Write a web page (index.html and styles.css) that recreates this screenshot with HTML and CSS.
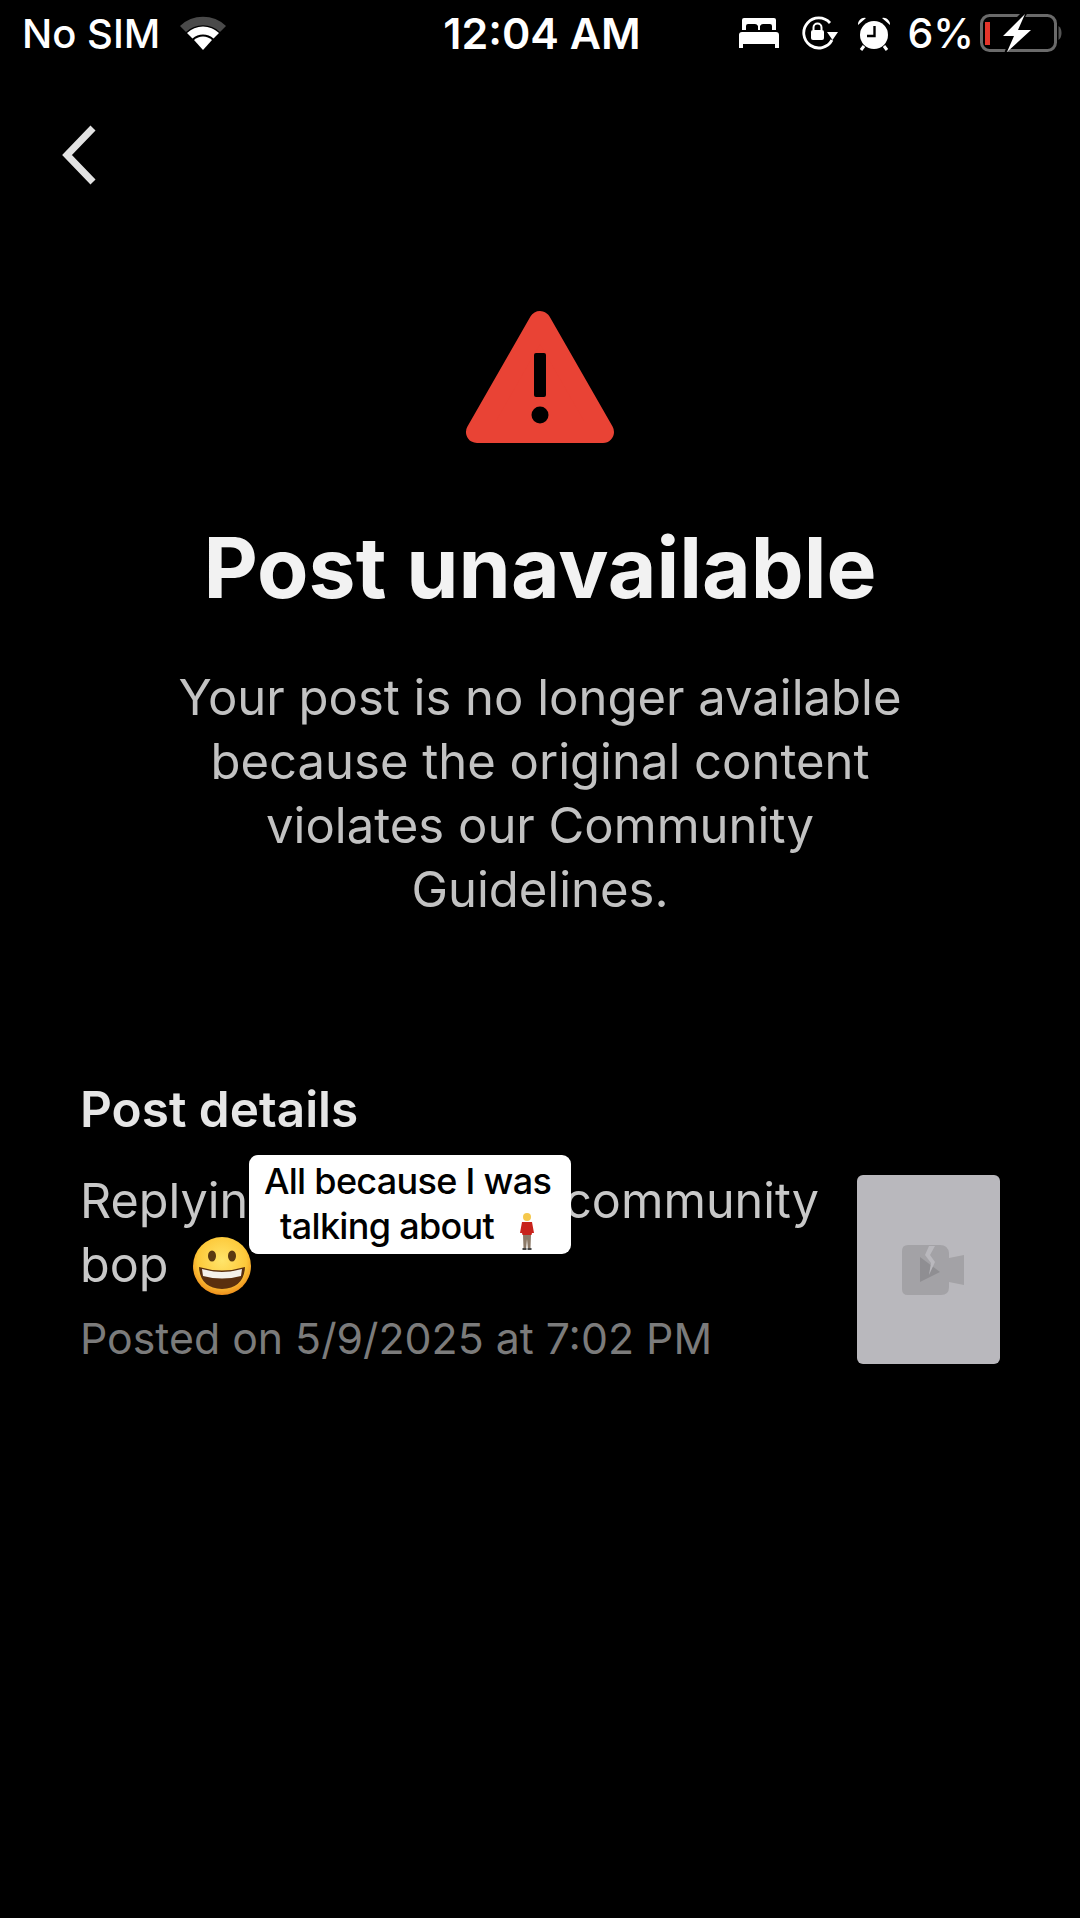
FILE: index.html
```html
<!DOCTYPE html>
<html lang="en">
<head>
  <meta charset="UTF-8">
  <meta name="viewport" content="width=device-width, initial-scale=1.0">
  <title>Post unavailable</title>
  <link rel="stylesheet" href="styles.css">
</head>
<body>
  <!-- Status bar -->
  <div class="status-bar">
    <div class="status-left">
      <span>No SIM</span>
      <svg class="wifi" width="50" height="36" viewBox="0 0 50 36">
        <path d="M2 11 A33 33 0 0 1 48 11 L42 17 A25 25 0 0 0 8 17 Z" fill="#4a4a4a"/>
        <path d="M9 18 A23 23 0 0 1 41 18 L35.500 23.500 A15.500 15.500 0 0 0 14.500 23.500 Z" fill="#fff"/>
        <path d="M16 25 A13 13 0 0 1 34 25 L25 35 Z" fill="#fff"/>
      </svg>
    </div>
    <div class="status-time">12:04 AM</div>
    <div class="status-right">
      <svg class="bed" width="42" height="32" viewBox="0 0 42 32">
        <path d="M4 3 Q4 1 6 1 H36 Q38 1 38 3 V13 H34 V9 Q34 7 32 7 H25 Q23 7 22 9 V13 H20 V9 Q19 7 17 7 H10 Q8 7 8 9 V13 H4 Z" fill="#fff"/>
        <path d="M1 18 Q1 15 4 15 H38 Q41 15 41 18 V31 H37 V27 H5 V31 H1 Z" fill="#fff"/>
      </svg>
      <svg class="lock" width="38" height="34" viewBox="0 0 38 34">
        <path d="M31 24 A15 15 0 1 1 29 7" fill="none" stroke="#fff" stroke-width="2.800"/>
        <path d="M26 16 L37 16 L31.500 24 Z" fill="#fff"/>
        <rect x="10" y="14" width="13" height="10" rx="2" fill="#fff"/>
        <path d="M12.500 14 V11.500 A4 4 0 0 1 20.500 11.500 V14" fill="none" stroke="#fff" stroke-width="2"/>
      </svg>
      <svg class="alarm" width="34" height="35" viewBox="0 0 34 35">
        <circle cx="17" cy="19" r="14" fill="#fff"/>
        <path d="M1 9 A6.500 6.500 0 0 1 9 2 Z M33 9 A6.500 6.500 0 0 0 25 2 Z" fill="#fff"/>
        <path d="M7 30 L4 34 M27 30 L30 34" stroke="#fff" stroke-width="3"/>
        <path d="M17.500 10 V20 H10" fill="none" stroke="#000" stroke-width="2.400"/>
      </svg>
      <span class="battery-pct">6%</span>
      <svg class="battery" width="82" height="40" viewBox="0 0 82 40">
        <rect x="1.500" y="2.500" width="74" height="35" rx="8" fill="none" stroke="#6a6a6a" stroke-width="3"/>
        <rect x="5" y="9" width="5" height="23" fill="#e5352b"/>
        <path d="M78.500 13 Q81.500 15 81.500 20 Q81.500 25 78.500 27 Z" fill="#555"/>
        <path d="M42 -1 L18 23 H30 L24 41 L55 15 H39 L48 -1 Z" fill="#000"/>
        <path d="M45 1 L23 23 H34 L27 39 L51 17 H38 L45 1 Z" fill="#fff"/>
      </svg>
    </div>
  </div>

  <!-- Nav -->
  <div class="nav">
    <svg width="36" height="62" viewBox="0 0 36 62">
      <path d="M32 4 L6 31 L32 58" fill="none" stroke="#e2e2e2" stroke-width="7"/>
    </svg>
  </div>

  <!-- Notice -->
  <div class="notice">
    <svg class="warn-icon" width="150" height="135" viewBox="0 0 150 135">
      <path d="M75 12 L12 122 H138 Z" fill="#e94335" stroke="#e94335" stroke-width="22" stroke-linejoin="round"/>
      <rect x="69" y="43" width="12" height="44" rx="2" fill="#000"/>
      <circle cx="75" cy="105" r="8.500" fill="#000"/>
    </svg>
    <h1>Post unavailable</h1>
    <p>Your post is no longer available<br>because the original content<br>violates our Community<br>Guidelines.</p>
  </div>

  <!-- Post details -->
  <div class="details">
    <h2>Post details</h2>
    <div class="details-row">
      <div class="details-text">
        <div class="caption">Replyin<span class="caption-gap"></span>community<br>bop
          <svg class="grin" width="60" height="60" viewBox="0 0 60 60">
            <defs>
              <radialGradient id="face" cx="50%" cy="40%" r="60%">
                <stop offset="0" stop-color="#ffe56b"/>
                <stop offset="0.7" stop-color="#fdc93a"/>
                <stop offset="1" stop-color="#ee8f1c"/>
              </radialGradient>
            </defs>
            <circle cx="30" cy="30" r="29" fill="url(#face)"/>
            <ellipse cx="20" cy="20" rx="4" ry="5.500" fill="#5a3a12"/>
            <ellipse cx="40" cy="20" rx="4" ry="5.500" fill="#5a3a12"/>
            <path d="M7 31 Q30 38 53 31 Q52 52 30 53 Q8 52 7 31 Z" fill="#5a2f0e"/>
            <path d="M10 33 Q30 39 50 33 L49 40 Q30 45 11 40 Z" fill="#f4f1ea"/>
          </svg>
        </div>
        <div class="posted">Posted on 5/9/2025 at 7:02 PM</div>
      </div>
      <div class="thumb">
        <svg width="62" height="50" viewBox="0 0 62 50">
          <path d="M6 0 H38 Q46 0 47 8 V13 L62 10 V40 L47 37 V42 Q47 50 39 50 H6 Q0 50 0 44 V6 Q0 0 6 0 Z" fill="#a3a2a6"/>
          <path d="M18 12 L38 27 L18 37 Z" fill="#8f8e92"/>
          <path d="M27 1 L23 10 L29 18 L27 30 L33 17 L28 10 L33 1 Z" fill="#b9b8bd"/>
        </svg>
      </div>
    </div>
    <!-- Caption sticker -->
    <div class="sticker">All because I was<br>talking about
      <svg class="man" width="16" height="38" viewBox="0 0 16 38">
        <circle cx="8" cy="5" r="4" fill="#f5c84c"/>
        <path d="M3 10 H13 L15 21 H13 L12.500 23 H3.500 L3 21 H1 Z" fill="#c8231c"/>
        <path d="M4 23 H12 L11.500 36 H8.800 L8 27 L7.200 36 H4.500 Z" fill="#8c7a68"/>
        <rect x="3.500" y="36" width="4" height="2" fill="#444"/>
        <rect x="8.500" y="36" width="4" height="2" fill="#444"/>
      </svg>
    </div>
  </div>
</body>
</html>
```

FILE: styles.css
```css
/* General Styles */
body {
  margin: 0;
  height: 1918px;
  overflow: hidden;
  background-color: #000;
  color: #fff;
  font-family: Inter, "Liberation Sans", sans-serif;
}

/* Status bar */
.status-bar {
  display: grid;
  grid-template-columns: 1fr auto 1fr;
  align-items: center;
  height: 66px;
  padding: 0 18px 0 22px;
  font-size: 40px;
  font-weight: 500;
}
.status-left {
  display: flex;
  align-items: center;
  gap: 18px;
}
.status-time {
  font-weight: 600;
  font-size: 43px;
}
.status-right {
  display: flex;
  align-items: center;
  justify-content: flex-end;
  gap: 21px;
}
.alarm {
  margin-left: -3px;
}
.battery-pct {
  font-size: 41px;
  margin-left: -5px;
  margin-right: -15px;
}

/* Nav */
.nav {
  height: 244px;
  padding: 58px 0 0 61px;
  box-sizing: border-box;
}

/* Notice */
.notice {
  display: flex;
  flex-direction: column;
  align-items: center;
  text-align: center;
}
.warn-icon {
  display: block;
}
.notice h1 {
  margin: 73px 0 0;
  font-size: 84px;
  line-height: 100px;
  font-weight: 700;
  color: #f2f2f2;
}
.notice p {
  margin: 48px 0 0;
  font-size: 49px;
  line-height: 64px;
  color: #c2c2c2;
}

/* Post details */
.details {
  position: relative;
  margin-top: 157px;
  padding: 0 80px;
}
.details h2 {
  margin: 0;
  font-size: 49.500px;
  line-height: 60px;
  font-weight: 600;
  color: #e6e6e6;
}
.details-row {
  display: flex;
  justify-content: space-between;
  margin-top: 36px;
}
.caption {
  margin-top: -6px;
  font-size: 48.500px;
  line-height: 64px;
  color: #c8c8c8;
}
.caption-gap {
  display: inline-block;
  width: 316px;
}
.grin {
  vertical-align: -14px;
  margin-left: 10px;
}
.posted {
  margin-top: 14px;
  font-size: 42.800px;
  line-height: 56px;
  color: #7b7b7b;
}
.thumb {
  display: flex;
  align-items: center;
  justify-content: center;
  width: 143px;
  height: 189px;
  background: #b9b8bd;
  border-radius: 6px;
}
.thumb svg {
  margin-left: 8px;
}

/* Caption sticker, sits over the caption */
.sticker {
  position: absolute;
  left: 249px;
  top: 76px;
  width: 322px;
  height: 99px;
  box-sizing: border-box;
  padding: 4px 5px 0 0;
  background: #fff;
  border-radius: 9px;
  color: #000;
  font-size: 36px;
  line-height: 45px;
  font-weight: 500;
  text-align: center;
  letter-spacing: -0.700px;
}
.man {
  vertical-align: -11px;
  margin-left: 16px;
}
```
